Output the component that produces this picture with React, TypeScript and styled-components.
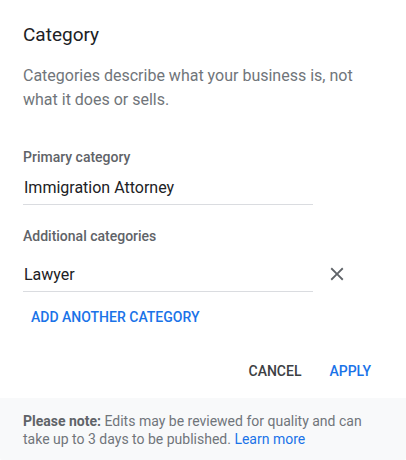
import React, { useState } from "react";
import styled, { createGlobalStyle } from "styled-components";

const GlobalStyle = createGlobalStyle`
  html, body {
    margin: 0;
    padding: 0;
    background: #ffffff;
  }
  body {
    font-family: Roboto, "Liberation Sans", Arial, sans-serif;
  }
`;

const Dialog = styled.div`
  width: 406px;
  height: 460px;
  display: flex;
  flex-direction: column;
  background: #fff;
  border-radius: 2px;
  overflow: hidden;
  box-sizing: border-box;
`;

const Body = styled.div`
  flex: 1;
  padding: 23px 27px 0 23px;
  display: flex;
  flex-direction: column;
`;

const Title = styled.h2`
  margin: 0;
  font-size: 19px;
  line-height: 24px;
  font-weight: 400;
  color: #202124;
`;

const Description = styled.p`
  margin: 17px 0 0;
  font-size: 16px;
  line-height: 24px;
  color: #70757a;
`;

const Label = styled.div<{ $top: number }>`
  margin-top: ${(p) => p.$top}px;
  font-size: 14px;
  line-height: 20px;
  font-weight: 500;
  color: #5f6368;
`;

const FieldRow = styled.div<{ $top: number }>`
  margin-top: ${(p) => p.$top}px;
  display: flex;
  align-items: center;
`;

const Field = styled.input`
  width: 290px;
  height: 36px;
  box-sizing: border-box;
  padding: 1px 0 0 1px;
  border: none;
  border-bottom: 1px solid #dadce0;
  outline: none;
  font-family: inherit;
  font-size: 16px;
  color: #202124;
  background: transparent;
`;

const IconButton = styled.button`
  width: 48px;
  height: 36px;
  padding: 0;
  border: none;
  background: none;
  display: flex;
  align-items: center;
  justify-content: center;
  color: #5f6368;
  cursor: pointer;
`;

const TextButton = styled.button<{ $primary?: boolean }>`
  height: 36px;
  padding: 0 8px;
  border: none;
  background: none;
  font-family: inherit;
  font-size: 14px;
  font-weight: 500;
  text-transform: uppercase;
  color: ${(p) => (p.$primary ? "#1a73e8" : "#3c4043")};
  cursor: pointer;
`;

const AddButton = styled(TextButton)`
  align-self: flex-start;
  margin-top: 7px;
`;

const Actions = styled.div`
  margin: 18px 0 9px;
  display: flex;
  justify-content: flex-end;
  gap: 12px;
`;

const Footer = styled.div`
  background: #f8f9fa;
  padding: 14px 27px 13px 23px;
  font-size: 14px;
  line-height: 18px;
  color: #70757a;

  b {
    font-weight: 700;
    color: #5f6368;
  }

  a {
    color: #1a73e8;
    text-decoration: none;
  }
`;

const CloseIcon = () => (
  <svg width="22" height="22" viewBox="0 0 24 24" fill="currentColor">
    <path d="M19 6.41L17.59 5 12 10.59 6.41 5 5 6.41 10.59 12 5 17.59 6.41 19 12 13.41 17.59 19 19 17.59 13.41 12z" />
  </svg>
);

const App: React.FC = () => {
  const [primary, setPrimary] = useState("Immigration Attorney");
  const [extra, setExtra] = useState(["Lawyer"]);

  return (
    <>
      <GlobalStyle />
      <Dialog>
        <Body>
          <Title>Category</Title>
          <Description>
            Categories describe what your business is, not what it does or
            sells.
          </Description>
          <Label $top={35}>Primary category</Label>
          <FieldRow $top={2}>
            <Field value={primary} onChange={(e) => setPrimary(e.target.value)} />
          </FieldRow>
          <Label $top={21}>Additional categories</Label>
          {extra.map((value, i) => (
            <FieldRow $top={10} key={i}>
              <Field
                value={value}
                onChange={(e) =>
                  setExtra(extra.map((v, j) => (j === i ? e.target.value : v)))
                }
              />
              <IconButton
                aria-label="Remove"
                onClick={() => setExtra(extra.filter((_, j) => j !== i))}
              >
                <CloseIcon />
              </IconButton>
            </FieldRow>
          ))}
          <AddButton $primary onClick={() => setExtra([...extra, ""])}>
            Add another category
          </AddButton>
          <Actions>
            <TextButton>Cancel</TextButton>
            <TextButton $primary>Apply</TextButton>
          </Actions>
        </Body>
        <Footer>
          <b>Please note:</b> Edits may be reviewed for quality and can take up
          to 3 days to be published. <a href="#">Learn more</a>
        </Footer>
      </Dialog>
    </>
  );
};

export default App;
